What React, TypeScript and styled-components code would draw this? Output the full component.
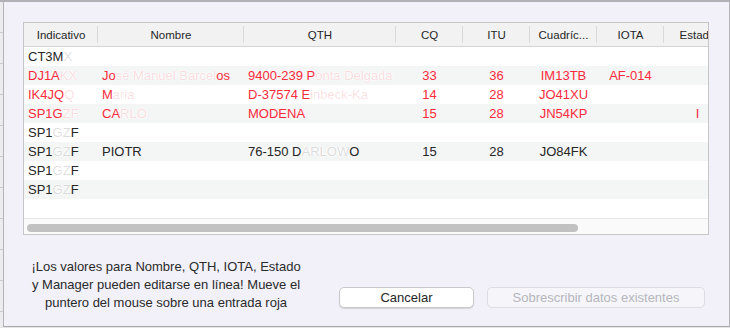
import React from 'react';
import styled, { createGlobalStyle } from 'styled-components';

const red = '#fa2b3c';
const ink = '#262626';

type Cell = { text: string; hide?: string; tail?: string };
type Row = { red?: boolean; cells: (Cell | string)[] };

const columns = [
  { title: 'Indicativo', width: 74, align: 'left' },
  { title: 'Nombre', width: 146, align: 'left' },
  { title: 'QTH', width: 152, align: 'left' },
  { title: 'CQ', width: 67, align: 'center' },
  { title: 'ITU', width: 67, align: 'center' },
  { title: 'Cuadríc...', width: 67, align: 'center' },
  { title: 'IOTA', width: 67, align: 'center' },
  { title: 'Estado', width: 67, align: 'center' },
];

const rows: Row[] = [
  { cells: [{ text: 'CT3M', hide: 'X' }] },
  {
    red: true,
    cells: [
      { text: 'DJ1A', hide: 'KX' },
      { text: 'Jo', hide: 'sé Manuel Barcel', tail: 'os' },
      { text: '9400-239 P', hide: 'onta Delgada' },
      '33',
      '36',
      'IM13TB',
      'AF-014',
    ],
  },
  {
    red: true,
    cells: [
      { text: 'IK4JQ', hide: 'Q' },
      { text: 'M', hide: 'aria' },
      { text: 'D-37574 E', hide: 'inbeck-Ka' },
      '14',
      '28',
      'JO41XU',
    ],
  },
  {
    red: true,
    cells: [
      { text: 'SP1G', hide: 'ZF' },
      { text: 'CA', hide: 'RLO' },
      'MODENA',
      '15',
      '28',
      'JN54KP',
      '',
      'I',
    ],
  },
  { cells: [{ text: 'SP1', hide: 'GZ', tail: 'F' }] },
  {
    cells: [
      { text: 'SP1', hide: 'GZ', tail: 'F' },
      'PIOTR',
      { text: '76-150 D', hide: 'ARLOW', tail: 'O' },
      '15',
      '28',
      'JO84FK',
    ],
  },
  { cells: [{ text: 'SP1', hide: 'GZ', tail: 'F' }] },
  { cells: [{ text: 'SP1', hide: 'GZ', tail: 'F' }] },
  { cells: [] },
];

const GlobalStyle = createGlobalStyle`
  html, body {
    margin: 0;
    padding: 0;
    background: #e6e6e9;
  }
  body {
    font-family: "Liberation Sans", Arial, sans-serif;
    -webkit-font-smoothing: antialiased;
  }
`;

export default function App() {
  return (
    <>
      <GlobalStyle />
      <Screen>
        <TopEdge />
        <Middle>
          <BackStrip />
          <Sheet>
            <Table>
              <HeaderRow>
                {columns.map((c, i) => (
                  <HeaderCell key={c.title} $width={c.width} $last={i === columns.length - 1}>
                    {c.title}
                  </HeaderCell>
                ))}
              </HeaderRow>
              {rows.map((r, ri) => (
                <DataRow key={ri} $striped={ri % 2 === 1}>
                  {columns.map((c, ci) => {
                    const cell = r.cells[ci];
                    const data: Cell = typeof cell === 'string' ? { text: cell } : cell || { text: '' };
                    return (
                      <DataCell
                        key={ci}
                        $width={c.width}
                        $align={c.align}
                        $red={!!r.red}
                      >
                        {data.text}
                        {data.hide && <Smudge $red={!!r.red}>{data.hide}</Smudge>}
                        {data.tail}
                      </DataCell>
                    );
                  })}
                </DataRow>
              ))}
              <ScrollArea>
                <Thumb />
              </ScrollArea>
            </Table>
            <Footer>
              <Note>
                ¡Los valores para Nombre, QTH, IOTA, Estado
                <br />
                y Manager pueden editarse en línea! Mueve el
                <br />
                puntero del mouse sobre una entrada roja
              </Note>
              <Buttons>
                <Button $width={135}>Cancelar</Button>
                <Button $width={218} disabled>
                  Sobrescribir datos existentes
                </Button>
              </Buttons>
            </Footer>
          </Sheet>
          <BackStrip $right />
        </Middle>
      </Screen>
    </>
  );
}

const Screen = styled.div`
  display: flex;
  flex-direction: column;
  width: 730px;
  height: 328px;
  overflow: hidden;
`;

const TopEdge = styled.div`
  height: 2px;
  background: #b2b2b6;
`;

const Middle = styled.div`
  display: flex;
  height: 325px;
`;

const BackStrip = styled.div<{ $right?: boolean }>`
  flex: ${(p) => (p.$right ? '1' : '0 0 3px')};
  background: repeating-linear-gradient(
    to bottom,
    #ececef 0px,
    #ececef 30px,
    #c9c9cf 30px,
    #c9c9cf 31px
  );
`;

const Sheet = styled.div`
  width: 722px;
  display: flex;
  flex-direction: column;
  background: #f2f1f9;
  border-left: 1px solid #b4b4b8;
  border-right: 1px solid #b4b4b8;
  border-bottom: 1px solid #a9a9ad;
  padding: 20px 0 0 19px;
  box-sizing: content-box;
  height: 304px;
`;

const Table = styled.div`
  width: 684px;
  height: 211px;
  border: 1px solid #c6c6c9;
  background: #fff;
  overflow: hidden;
  display: flex;
  flex-direction: column;
`;

const HeaderRow = styled.div`
  display: flex;
  height: 23px;
  flex: 0 0 23px;
  background: #f2f2f2;
  border-bottom: 1px solid #d4d4d6;
`;

const HeaderCell = styled.div<{ $width: number; $last: boolean }>`
  flex: 0 0 ${(p) => p.$width}px;
  box-sizing: border-box;
  display: flex;
  align-items: center;
  justify-content: center;
  white-space: nowrap;
  font-size: 11.5px;
  color: ${ink};
  position: relative;
  &::after {
    content: '';
    display: ${(p) => (p.$last ? 'none' : 'block')};
    position: absolute;
    right: 0;
    top: 3px;
    bottom: 3px;
    width: 1px;
    background: #d9d9db;
  }
`;

const DataRow = styled.div<{ $striped: boolean }>`
  display: flex;
  height: 19px;
  flex: 0 0 19px;
  background: ${(p) => (p.$striped ? '#f4f5f5' : '#fff')};
`;

const DataCell = styled.div<{ $width: number; $align: string; $red: boolean }>`
  flex: 0 0 ${(p) => p.$width}px;
  box-sizing: border-box;
  padding: 0 4px;
  overflow: hidden;
  white-space: nowrap;
  font-size: 13px;
  line-height: 19px;
  text-align: ${(p) => p.$align};
  color: ${(p) => (p.$red ? red : ink)};
`;

const Smudge = styled.span<{ $red: boolean }>`
  color: ${(p) => (p.$red ? 'rgba(250, 43, 60, 0.16)' : 'rgba(38, 38, 38, 0.16)')};
  text-shadow: 0 0 2px #fff, 0 0 3px #fff;
`;

const ScrollArea = styled.div`
  flex: 0 0 16px;
  box-sizing: border-box;
  border-top: 1px solid #e6e6e6;
  background: #fafafa;
  padding: 5px 0 0 3px;
`;

const Thumb = styled.div`
  width: 551px;
  height: 8px;
  border-radius: 4px;
  background: #c1c1c1;
`;

const Footer = styled.div`
  flex: 1;
  display: flex;
  align-items: flex-end;
  padding: 0 24px 14px 2px;
`;

const Note = styled.div`
  width: 282px;
  text-align: center;
  font-size: 13px;
  line-height: 18px;
  color: #2a2a2a;
  white-space: nowrap;
`;

const Buttons = styled.div`
  margin-left: auto;
  display: flex;
  gap: 13px;
  margin-bottom: 4px;
`;

const Button = styled.button<{ $width: number }>`
  width: ${(p) => p.$width}px;
  height: 21px;
  padding: 0;
  font-family: "Liberation Sans", Arial, sans-serif;
  font-size: 13px;
  color: ${ink};
  background: #fff;
  border: 1px solid #c9c9cc;
  border-radius: 5px;
  box-shadow: 0 1px 1px rgba(0, 0, 0, 0.12);
  &:disabled {
    color: #b6b6bc;
    background: #f5f5fa;
    border-color: #dcdce3;
    box-shadow: none;
  }
`;
